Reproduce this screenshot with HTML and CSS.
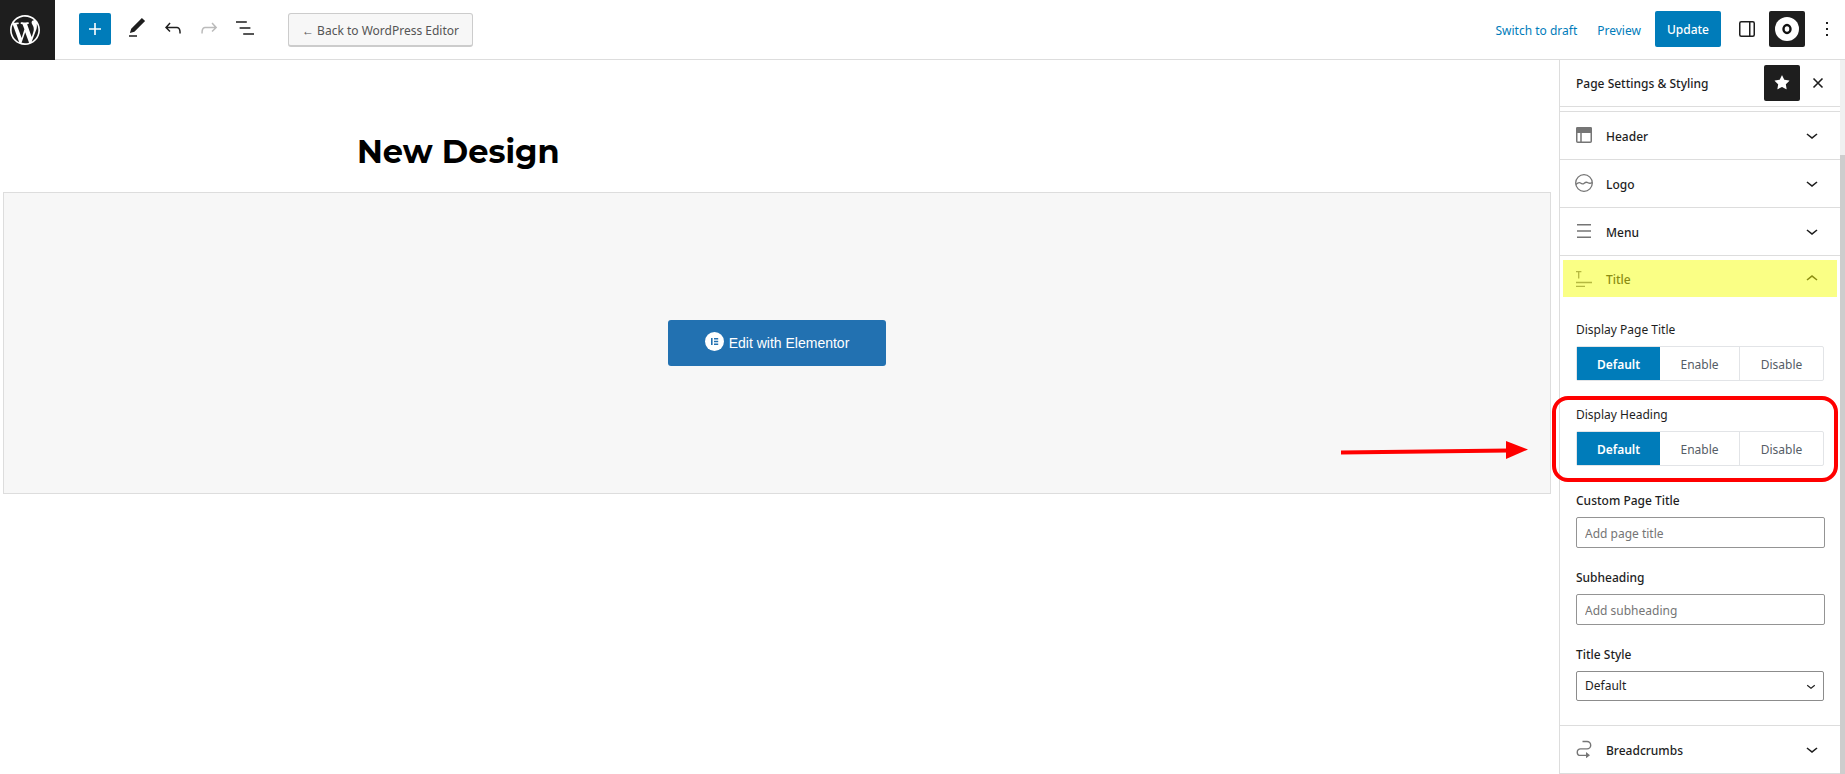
FILE: index.html
```html
<!DOCTYPE html>
<html lang="en">
<head>
<meta charset="utf-8">
<title>Edit Page</title>
<link rel="stylesheet" href="styles.css">
</head>
<body>
<div class="editor">
  <header class="topbar">
    <a class="wp-logo" href="#" aria-label="View pages">
      <svg width="36" height="36" viewBox="-2 -2 24 24" fill="currentColor"><path d="M20 10c0-5.51-4.49-10-10-10C4.48 0 0 4.49 0 10c0 5.52 4.48 10 10 10 5.51 0 10-4.48 10-10zM7.78 15.37L4.37 6.22c.55-.02 1.17-.08 1.17-.08.5-.06.44-1.13-.06-1.11 0 0-1.45.11-2.37.11-.18 0-.37 0-.58-.01C4.12 2.69 6.87 1.11 10 1.11c2.33 0 4.45.87 6.05 2.34-.68-.11-1.65.39-1.65 1.58 0 .74.45 1.36.9 2.1.35.61.55 1.36.55 2.46 0 1.49-1.4 5-1.4 5l-3.03-8.37c.54-.02.82-.17.82-.17.5-.05.44-1.25-.06-1.22 0 0-1.44.12-2.38.12-.87 0-2.33-.12-2.33-.12-.5-.03-.56 1.2-.06 1.22l.92.08 1.26 3.41zM17.41 10c.24-.64.74-1.87.43-4.25.7 1.29 1.05 2.71 1.05 4.25 0 3.29-1.73 6.24-4.4 7.78.97-2.59 1.94-5.2 2.92-7.78zM6.1 18.09C3.12 16.65 1.11 13.53 1.11 10c0-1.3.23-2.48.72-3.59C3.25 10.3 4.67 14.2 6.1 18.09zm4.03-6.63l2.58 6.98c-.86.29-1.76.45-2.71.45-.79 0-1.57-.11-2.29-.33.81-2.38 1.62-4.74 2.42-7.1z"/></svg>
    </a>
    <div class="tools">
      <button class="add-btn" type="button" aria-label="Add block">
        <svg width="24" height="24" viewBox="0 0 24 24" fill="currentColor"><path d="M18 11.2h-5.2V6h-1.6v5.2H6v1.6h5.2V18h1.6v-5.2H18z"/></svg>
      </button>
      <div class="tool-group">
        <button class="icon-btn" type="button" aria-label="Tools">
          <svg width="24" height="24" viewBox="0 0 24 24" fill="currentColor"><path d="M20.1 5.1L16.9 2 6.2 12.7l-1.3 4.4 4.5-1.3L20.1 5.1zM4 20.8h8v-1.5H4v1.5z"/></svg>
        </button>
        <button class="icon-btn" type="button" aria-label="Undo">
          <svg width="24" height="24" viewBox="0 0 24 24" fill="currentColor"><path d="M18.3 11.7c-.6-.6-1.4-.9-2.3-.9H6.7l2.9-3.3-1.1-1-4.5 5L8.5 16l1-1-2.7-2.7H16c.5 0 .9.2 1.3.5 1 1 1 3.4 1 4.5v.3h1.5v-.2c0-1.5 0-4.3-1.5-5.7z"/></svg>
        </button>
        <button class="icon-btn" type="button" aria-label="Redo" disabled>
          <svg width="24" height="24" viewBox="0 0 24 24" fill="currentColor"><path d="M15.6 6.5l-1.1 1 2.9 3.3H8c-.9 0-1.7.3-2.3.9-1.4 1.5-1.4 4.2-1.4 5.6v.2h1.5v-.3c0-1.1 0-3.5 1-4.5.3-.3.7-.5 1.3-.5h9.2L14.5 15l1.1 1.1 4.6-4.6-4.6-5z"/></svg>
        </button>
        <button class="icon-btn" type="button" aria-label="List view">
          <svg width="24" height="24" viewBox="0 0 24 24" fill="currentColor"><path d="M13.8 5.2H3v1.5h10.8V5.2zm-3.6 12v1.5H21v-1.5H10.2zm7.2-6H6.6v1.5h10.8v-1.5z"/></svg>
        </button>
      </div>
      <button class="back-btn" type="button">← Back to WordPress Editor</button>
    </div>
    <div class="actions">
      <button class="link-btn" type="button">Switch to draft</button>
      <button class="link-btn" type="button">Preview</button>
      <button class="update-btn" type="button">Update</button>
      <div class="panel-toggles">
        <button class="icon-btn" type="button" aria-label="Settings">
          <svg width="24" height="24" viewBox="0 0 24 24" fill="none" stroke="currentColor" stroke-width="1.5"><rect x="4.75" y="4.75" width="14.5" height="14.5" rx="1.5"/><path d="M14.75 5v14"/></svg>
        </button>
        <button class="icon-btn icon-btn-dark" type="button" aria-label="Page settings">
          <svg width="24" height="24" viewBox="0 0 24 24"><circle cx="12" cy="12" r="12" fill="#fff"/><ellipse cx="12" cy="12" rx="3.5" ry="4" fill="none" stroke="#111" stroke-width="2.4"/></svg>
        </button>
        <button class="icon-btn" type="button" aria-label="Options">
          <svg width="24" height="24" viewBox="0 0 24 24" fill="currentColor"><path d="M13 19h-2v-2h2v2zm0-6h-2v-2h2v2zm0-6h-2V5h2v2z"/></svg>
        </button>
      </div>
    </div>
  </header>

  <div class="body">
    <main class="canvas">
      <h1 class="page-title">New Design</h1>
      <div class="builder">
        <button class="elementor-btn" type="button">
          <svg width="19" height="19" viewBox="0 0 19 19"><circle cx="9.500" cy="9.500" r="9.500" fill="#fff"/><path d="M6 6h1.600v7H6zM9 6h4.200v1.500H9zM9 8.800h4.200v1.500H9zM9 11.500h4.200V13H9z" fill="#2271b1"/></svg>
          <span>Edit with Elementor</span>
        </button>
      </div>
      <svg class="arrow" width="188" height="20" viewBox="0 0 188 20" aria-hidden="true"><path d="M0 12.500L168 10.500" stroke="#f00" stroke-width="4"/><path d="M165 1v18l22-9.500z" fill="#f00"/></svg>
    </main>

    <aside class="sidebar">
      <div class="side-head">
        <h2 class="side-title">Page Settings &amp; Styling</h2>
        <button class="icon-btn icon-btn-dark" type="button" aria-label="Unpin">
          <svg width="24" height="24" viewBox="0 0 24 24" fill="currentColor"><path d="M11.776 4.454a.25.25 0 01.448 0l2.069 4.192a.25.25 0 00.188.137l4.626.672a.25.25 0 01.139.426l-3.348 3.263a.25.25 0 00-.072.222l.79 4.607a.25.25 0 01-.362.263l-4.138-2.175a.25.25 0 00-.232 0l-4.138 2.175a.25.25 0 01-.363-.263l.79-4.607a.25.25 0 00-.071-.222L4.754 9.881a.25.25 0 01.139-.426l4.626-.672a.25.25 0 00.188-.137l2.069-4.192z"/></svg>
        </button>
        <button class="icon-btn" type="button" aria-label="Close">
          <svg width="24" height="24" viewBox="0 0 24 24" fill="none" stroke="currentColor" stroke-width="1.6"><path d="M7.500 7.500l9 9M16.500 7.500l-9 9"/></svg>
        </button>
      </div>

      <div class="panels">
        <section class="panel">
          <button class="panel-btn" type="button">
            <svg class="panel-icon" width="18" height="18" viewBox="0 0 18 18"><rect x="1.750" y="1.750" width="14.500" height="14.500" rx="1" fill="none" stroke="currentColor" stroke-width="1.500"/><path d="M1 2.500Q1 1 2.500 1h13Q17 1 17 2.500V7H1z" fill="currentColor"/><path d="M6 7v9" stroke="currentColor" stroke-width="1.500"/></svg>
            <span>Header</span>
            <svg class="chevron" width="24" height="24" viewBox="0 0 24 24"><path d="M17.500 11.600L12 16l-5.500-4.400.9-1.200L12 14l4.500-3.600 1 1.200z"/></svg>
          </button>
        </section>
        <section class="panel">
          <button class="panel-btn" type="button">
            <svg class="panel-icon" width="18" height="18" viewBox="0 0 18 18" fill="none" stroke="currentColor" stroke-width="1.300"><circle cx="9" cy="9" r="8.300"/><path d="M.8 10.500C3 8.500 4.300 8 5.500 9s2.200 1.500 3.700.2 2.600-1.200 3.800-.5 2.500.8 4.200-.1"/></svg>
            <span>Logo</span>
            <svg class="chevron" width="24" height="24" viewBox="0 0 24 24"><path d="M17.500 11.600L12 16l-5.500-4.400.9-1.200L12 14l4.500-3.600 1 1.200z"/></svg>
          </button>
        </section>
        <section class="panel">
          <button class="panel-btn" type="button">
            <svg class="panel-icon" width="18" height="18" viewBox="0 0 18 18" stroke="currentColor" stroke-width="1.400"><path d="M2 2.700h14M2 9h14M2 15.300h14"/></svg>
            <span>Menu</span>
            <svg class="chevron" width="24" height="24" viewBox="0 0 24 24"><path d="M17.500 11.600L12 16l-5.500-4.400.9-1.200L12 14l4.500-3.600 1 1.200z"/></svg>
          </button>
        </section>
        <section class="panel">
          <button class="panel-btn panel-btn-marked" type="button" aria-expanded="true">
            <svg class="panel-icon" width="18" height="18" viewBox="0 0 18 18" stroke="currentColor" stroke-width="1.300"><path d="M1 1.700h5.400M3.700 1.700V8.500M1 12.500h16M1 16.300h9"/></svg>
            <span>Title</span>
            <svg class="chevron" width="24" height="24" viewBox="0 0 24 24"><path d="M6.500 12.400L12 8l5.500 4.400-.9 1.200L12 10l-4.500 3.600-1-1.200z"/></svg>
          </button>
          <div class="fields">
            <fieldset class="choice">
              <legend class="label">Display Page Title</legend>
              <div class="segments">
                <button class="segment segment-on" type="button" aria-pressed="true">Default</button>
                <button class="segment" type="button" aria-pressed="false">Enable</button>
                <button class="segment" type="button" aria-pressed="false">Disable</button>
              </div>
            </fieldset>
            <fieldset class="choice">
              <legend class="label">Display Heading</legend>
              <div class="segments">
                <button class="segment segment-on" type="button" aria-pressed="true">Default</button>
                <button class="segment" type="button" aria-pressed="false">Enable</button>
                <button class="segment" type="button" aria-pressed="false">Disable</button>
              </div>
              <span class="callout" aria-hidden="true"></span>
            </fieldset>
            <div class="field">
              <label class="label label-strong" for="page-title">Custom Page Title</label>
              <input class="text-input" id="page-title" type="text" placeholder="Add page title">
            </div>
            <div class="field">
              <label class="label label-strong" for="subheading">Subheading</label>
              <input class="text-input" id="subheading" type="text" placeholder="Add subheading">
            </div>
            <div class="field">
              <label class="label label-strong" for="title-style">Title Style</label>
              <div class="select-wrap">
                <select class="select" id="title-style"><option>Default</option></select>
                <svg class="select-arrow" width="18" height="18" viewBox="0 0 24 24"><path d="M17.500 11.600L12 16l-5.500-4.400.9-1.200L12 14l4.500-3.600 1 1.200z"/></svg>
              </div>
            </div>
          </div>
        </section>
        <section class="panel panel-last">
          <button class="panel-btn" type="button">
            <svg class="panel-icon" width="18" height="18" viewBox="0 0 18 18" fill="none" stroke="currentColor" stroke-width="1.400"><path d="M7.500 1.500H12a3.700 3.700 0 0 1 0 7.400H5.500a3.200 3.200 0 0 0 0 6.500H12"/><path d="M11 12l4 3.300-4 3z" fill="currentColor" stroke="none"/></svg>
            <span>Breadcrumbs</span>
            <svg class="chevron" width="24" height="24" viewBox="0 0 24 24"><path d="M17.500 11.600L12 16l-5.500-4.400.9-1.200L12 14l4.500-3.600 1 1.200z"/></svg>
          </button>
        </section>
      </div>
    </aside>
    <div class="scrollbar" aria-hidden="true"><div class="thumb"></div></div>
  </div>
</div>
</body>
</html>
```
FILE: styles.css
```css
* { box-sizing: border-box; }

body {
  margin: 0;
  background: #fff;
  color: #1e1e1e;
  font-family: "Noto Sans", "Open Sans", sans-serif;
  font-size: 12px;
  line-height: 16px;
}

button, input, select { font: inherit; color: inherit; }
button { border: 0; padding: 0; background: none; cursor: pointer; }
svg { display: block; flex: none; }

.editor { display: flex; flex-direction: column; min-height: 100vh; }

/* Top bar */
.topbar { display: flex; height: 60px; }
.wp-logo { display: flex; align-items: center; width: 55px; padding-left: 7px; background: #1e1e1e; color: #fff; }
.tools, .actions { display: flex; align-items: center; border-bottom: 1px solid #ddd; padding-bottom: 3px; }
.tools { flex: 1; padding-left: 24px; }
.tool-group { display: flex; margin: 0 25px 0 8px; }
.add-btn { display: flex; align-items: center; justify-content: center; width: 32px; height: 32px; margin-top: 1px; border-radius: 2px; background: #007cba; color: #fff; }
.icon-btn { display: flex; align-items: center; justify-content: center; width: 36px; height: 36px; border-radius: 2px; }
.icon-btn:disabled { color: #bbb; }
.icon-btn-dark { background: #1e1e1e; color: #fff; }
.back-btn { height: 34px; margin-top: 4px; padding: 2px 13px 0; border: 1px solid #ccc; border-bottom-width: 2px; border-radius: 3px; background: #f7f7f7; color: #555; }
.link-btn { margin: 5px 20px 0 0; color: #007cba; }
.link-btn + .link-btn { margin-right: 14px; }
.update-btn { height: 36px; margin: 2px 8px 0 0; padding: 2px 12px 0; border-radius: 2px; background: #007cba; color: #fff; font-weight: 500; }
.panel-toggles { display: flex; gap: 4px; margin-top: 2px; }

.body { display: flex; flex: 1; }

/* Canvas */
.canvas { position: relative; flex: 1; padding: 71px 8px 0 3px; }
.page-title { margin: 0 0 19px 354px; color: #000; font-family: Montserrat, Inter, sans-serif; font-size: 32px; font-weight: 700; line-height: 42px; }
.builder { display: flex; align-items: center; justify-content: center; height: 302px; border: 1px solid #ddd; background: #f7f7f7; }
.elementor-btn { display: flex; align-items: center; gap: 5px; height: 46px; padding: 0 37px; border-radius: 3px; background: #2271b1; color: #fff; font-family: "Liberation Sans", Arial, sans-serif; font-size: 14px; }
.elementor-btn svg { margin-bottom: 3px; }
.arrow { position: absolute; top: 380px; right: 30px; }

/* Sidebar */
.sidebar { width: 281px; border-left: 1px solid #ddd; }
.side-head { display: flex; align-items: center; height: 47px; padding: 0 4px 0 16px; border-bottom: 1px solid #ddd; }
.side-title { flex: 1; margin: 0; padding-top: 2px; font-size: 12px; font-weight: 500; }
.panels { padding-top: 4px; }
.panel { border-top: 1px solid #ddd; }
.panel-last { border-bottom: 1px solid #ddd; }
.panel-btn { display: flex; align-items: center; gap: 13px; width: 100%; height: 47px; padding: 0 16px 0 15px; font-weight: 500; text-align: left; }
.panel-btn span { flex: 1; padding-top: 2px; }
.panel-btn svg { margin-bottom: 2px; }
.panel-icon { color: #757575; }
.chevron { fill: #1e1e1e; }
.panel-btn-marked { width: calc(100% - 6px); height: 37px; margin: 4px 3px 6px; padding: 0 13px 0 12px; background: #faff85; color: #8b8d12; }
.panel-btn-marked svg { margin-bottom: 0; }
.panel-btn-marked .panel-icon { color: #b5b840; }
.panel-btn-marked .chevron { fill: #8b8d12; }

.fields { padding: 19px 15px 24px 16px; }
.label { display: block; margin: 0; padding: 0; line-height: 16px; }
.label-strong { font-weight: 500; }
.choice { position: relative; min-width: 0; margin: 0 0 26px; padding: 0; border: 0; }
.segments { display: grid; grid-template-columns: 83px 79px 1fr; margin: 8px 1px 0 0; border: 1px solid #e2e4e7; border-radius: 2px; }
.segment { height: 33px; padding-top: 2px; color: #555d66; }
.segment + .segment + .segment { border-left: 1px solid #e2e4e7; }
.segment-on { background: #007cba; color: #fff; font-weight: 600; }
.callout { position: absolute; inset: -27px -13px -16px -24px; border: 4px solid #f00; border-radius: 16px; pointer-events: none; }
.choice + .field { padding-top: 1px; }
.field { margin-bottom: 22px; }
.field:last-child { margin-bottom: 0; }
.text-input { display: block; width: 100%; height: 31px; margin-top: 8px; padding: 2px 8px 0; border: 1px solid #949494; border-radius: 2px; background: #fff; }
.text-input::placeholder { color: #757575; opacity: 1; }
.select-wrap { position: relative; margin: 8px 1px 0 0; }
.select { display: block; width: 100%; height: 30px; padding: 0 8px; border: 1px solid #8c8c8c; border-radius: 2px; background: #fff; appearance: none; }
.select-arrow { position: absolute; top: 6px; right: 4px; fill: #1e1e1e; pointer-events: none; }

.scrollbar { width: 5px; padding-top: 95px; background: #f0f0f0; }
.thumb { height: 100%; background: #cdcdcd; }
```
